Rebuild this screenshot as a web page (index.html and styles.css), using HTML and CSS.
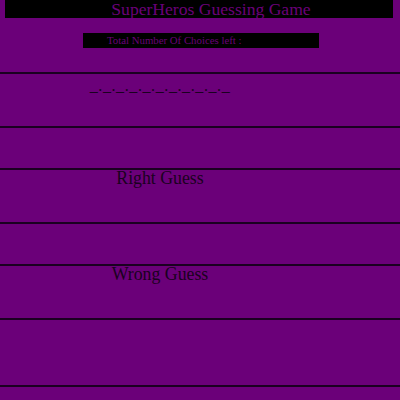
FILE: index.html
```html
<!DOCTYPE html>
<html>
<head>
<meta charset="utf-8">
<link rel="stylesheet" href="styles.css">
</head>
<body>
<h1 class="title">SuperHeros Guessing Game</h1>
<div class="choices">Total Number Of Choices left :</div>
<section class="row row-word"><div class="col word">_._._._._._._._._._._</div></section>
<section class="row row-short"></section>
<section class="row row-tall"><div class="col label">Right Guess</div></section>
<section class="row row-short"></section>
<section class="row row-tall"><div class="col label">Wrong Guess</div></section>
<section class="row row-big"></section>
<section class="row row-end"></section>
</body>
</html>
```
FILE: styles.css
```css
html, body {
  margin: 0;
  padding: 0;
}
body {
  background: #6b0079;
  font-family: "Liberation Serif", "Times New Roman", serif;
  width: 400px;
  height: 400px;
  overflow: hidden;
}
.title {
  margin: 0 7px 0 5px;
  height: 18px;
  background: #000;
  color: #6b0079;
  font-size: 17.6px;
  font-weight: normal;
  line-height: 19px;
  text-align: center;
  padding-left: 24px;
}
.choices {
  margin: 15px 0 0 83px;
  width: 212px;
  height: 15px;
  background: #000;
  color: #6b0079;
  font-size: 10.8px;
  line-height: 14px;
  padding-left: 24px;
}
.row {
  border-top: 2px solid #1a0020;
}
.row-word { margin-top: 24px; height: 52px; }
.row-short { height: 40px; }
.row-tall { height: 52px; }
.row-big { height: 65px; }
.row-end { height: 20px; }
.col {
  width: 320px;
  text-align: center;
}
.word {
  padding-top: 4px;
  font-size: 16px;
  line-height: 16px;
  letter-spacing: 0.6px;
  color: #1a0020;
}
.label {
  font-size: 17.8px;
  line-height: 17px;
  color: #1a0020;
}
```
